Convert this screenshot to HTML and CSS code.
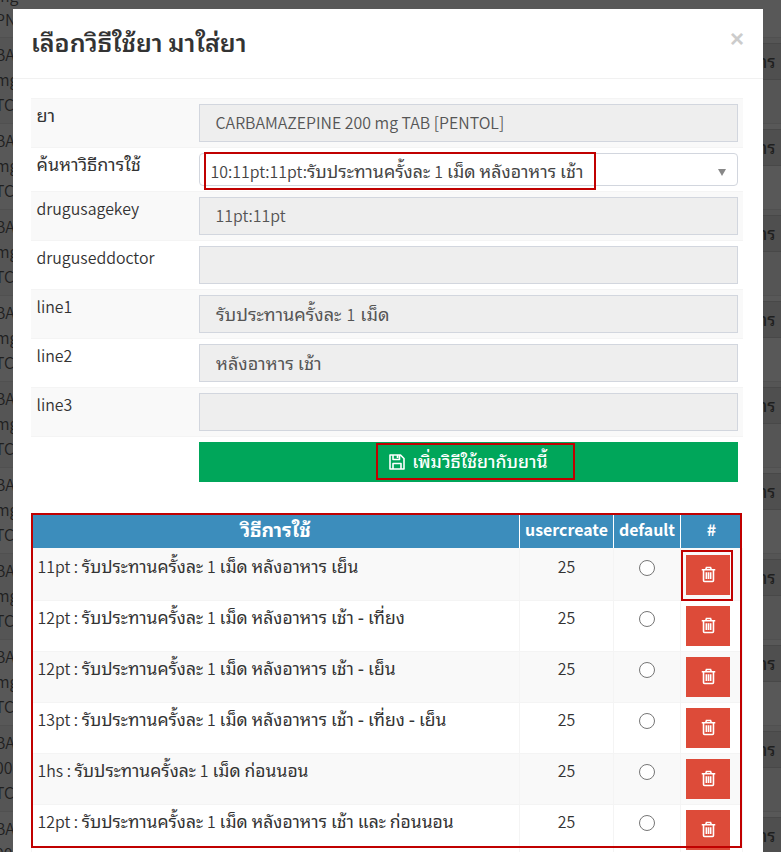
FILE: index.html
```html
<!DOCTYPE html>
<html lang="th">
<head>
<meta charset="utf-8">
<title>เลือกวิธีใช้ยา</title>
<link rel="stylesheet" href="styles.css">
</head>
<body>
<div class="page">
  <div class="back">
    <div class="strip">
      <div class="brow first">mg<br>PN</div>
      <div class="brow">BA<br>mg<br>TC</div><div class="brow">BA<br>mg<br>TC</div>
      <div class="brow">BA<br>mg<br>TC</div><div class="brow">BA<br>mg<br>TC</div>
      <div class="brow">BA<br>mg<br>TC</div><div class="brow">BA<br>mg<br>TC</div>
      <div class="brow">BA<br>mg<br>TC</div><div class="brow">BA<br>mg<br>TC</div>
      <div class="brow">BA<br>00<br>TC</div><div class="brow">BA<br>00</div>
    </div>
    <div class="strip right">
      <div class="brow first"></div>
      <div class="brow"><p>าร</p></div><div class="brow"><p>าร</p></div>
      <div class="brow"><p>าร</p></div><div class="brow"><p>าร</p></div>
      <div class="brow"><p>าร</p></div><div class="brow"><p>าร</p></div>
      <div class="brow"><p>าร</p></div><div class="brow"><p>าร</p></div>
      <div class="brow"><p>าร</p></div><div class="brow"><p>าร</p></div>
    </div>
  </div>
  <div class="modal">
    <div class="head"><h4>เลือกวิธีใช้ยา มาใส่ยา</h4><span class="close">×</span></div>
    <div class="body">
      <div class="form">
        <div class="row"><label class="th">ยา</label><div class="input latin">CARBAMAZEPINE 200 mg TAB [PENTOL]</div></div>
        <div class="row short"><label class="th">ค้นหาวิธีการใช้</label><div class="select"><span><b class="k">10:11pt:11pt:</b>รับประทานครั้งละ <b class="k">1</b> เม็ด หลังอาหาร เช้า</span><i></i></div></div>
        <div class="row"><label>drugusagekey</label><div class="input latin">11pt:11pt</div></div>
        <div class="row"><label>druguseddoctor</label><div class="input"></div></div>
        <div class="row"><label>line1</label><div class="input"><span class="t">รับประทานครั้งละ<b class="k">&nbsp; 1&nbsp; </b>เม็ด</span></div></div>
        <div class="row"><label>line2</label><div class="input"><span class="t">หลังอาหาร เช้า</span></div></div>
        <div class="row"><label>line3</label><div class="input"></div></div>
        <div class="row last"><label></label><div class="add"><svg width="16" height="16" viewBox="0 0 16 16"><path d="M1 1h10.5L15 4.5V15H1zM4 1v4.5h6.5V1M8.5 1v3M4 15V9.5h8V15" fill="none" stroke="#fff" stroke-width="1.6" stroke-linejoin="round"/></svg><span>เพิ่มวิธีใช้ยากับยานี้</span></div></div>
      </div>
      <div class="list">
        <div class="tr hd"><div class="th">วิธีการใช้</div><div>usercreate</div><div>default</div><div>#</div></div>
        <div class="tr one"><div><b class="k">11pt : </b>รับประทานครั้งละ <b class="k">1</b> เม็ด หลังอาหาร เย็น</div><div>25</div><div><i></i></div><div><a class="del"><svg width="15" height="17" viewBox="0 0 16 18"><path d="M.8 4h14.4M5 4l.8-2.5h4.4L11 4M2.7 4v11.5q0 1 1 1h8.6q1 0 1-1V4M5.7 6.5v7.3M8 6.5v7.3M10.3 6.5v7.3"/></svg></a></div></div>
        <div class="tr"><div><b class="k">12pt : </b>รับประทานครั้งละ <b class="k">1</b> เม็ด หลังอาหาร เช้า - เที่ยง</div><div>25</div><div><i></i></div><div><a class="del"><svg width="15" height="17" viewBox="0 0 16 18"><path d="M.8 4h14.4M5 4l.8-2.5h4.4L11 4M2.7 4v11.5q0 1 1 1h8.6q1 0 1-1V4M5.7 6.5v7.3M8 6.5v7.3M10.3 6.5v7.3"/></svg></a></div></div>
        <div class="tr"><div><b class="k">12pt : </b>รับประทานครั้งละ <b class="k">1</b> เม็ด หลังอาหาร เช้า - เย็น</div><div>25</div><div><i></i></div><div><a class="del"><svg width="15" height="17" viewBox="0 0 16 18"><path d="M.8 4h14.4M5 4l.8-2.5h4.4L11 4M2.7 4v11.5q0 1 1 1h8.6q1 0 1-1V4M5.7 6.5v7.3M8 6.5v7.3M10.3 6.5v7.3"/></svg></a></div></div>
        <div class="tr"><div><b class="k">13pt : </b>รับประทานครั้งละ <b class="k">1</b> เม็ด หลังอาหาร เช้า - เที่ยง - เย็น</div><div>25</div><div><i></i></div><div><a class="del"><svg width="15" height="17" viewBox="0 0 16 18"><path d="M.8 4h14.4M5 4l.8-2.5h4.4L11 4M2.7 4v11.5q0 1 1 1h8.6q1 0 1-1V4M5.7 6.5v7.3M8 6.5v7.3M10.3 6.5v7.3"/></svg></a></div></div>
        <div class="tr"><div><b class="k">1hs : </b>รับประทานครั้งละ <b class="k">1</b> เม็ด ก่อนนอน</div><div>25</div><div><i></i></div><div><a class="del"><svg width="15" height="17" viewBox="0 0 16 18"><path d="M.8 4h14.4M5 4l.8-2.5h4.4L11 4M2.7 4v11.5q0 1 1 1h8.6q1 0 1-1V4M5.7 6.5v7.3M8 6.5v7.3M10.3 6.5v7.3"/></svg></a></div></div>
        <div class="tr"><div><b class="k">12pt : </b>รับประทานครั้งละ <b class="k">1</b> เม็ด หลังอาหาร เช้า และ ก่อนนอน</div><div>25</div><div><i></i></div><div><a class="del"><svg width="15" height="17" viewBox="0 0 16 18"><path d="M.8 4h14.4M5 4l.8-2.5h4.4L11 4M2.7 4v11.5q0 1 1 1h8.6q1 0 1-1V4M5.7 6.5v7.3M8 6.5v7.3M10.3 6.5v7.3"/></svg></a></div></div>
      </div>
    </div>
  </div>
  <div class="mark m1"></div><div class="mark m2"></div><div class="mark m3"></div><div class="mark m4"></div>
</div>
</body>
</html>
```
FILE: styles.css
```css
* { box-sizing: border-box; }
body { margin: 0; }
.page { position: relative; width: 781px; height: 852px; overflow: hidden; background: #585858;
  font: 350 15.9px/24px "Noto Sans CJK SC", "Noto Sans Thai Looped", Loma, Waree, Garuda, "Noto Sans Thai", sans-serif; color: #333; }
.back { position: absolute; inset: 0; display: flex; justify-content: space-between; }
.strip { width: 40px; }
.right { width: 18px; }
.brow { height: 86px; padding: 4px 0 0; border-top: 1px solid #505050; line-height: 25px; color: #1f1f1f; margin-left: -5px; white-space: nowrap; }
.brow:nth-child(even) { background: #555; }
.brow.first { height: 37px; line-height: 24px; padding: 0 0 5px; border: 0; display: flex; flex-direction: column; justify-content: flex-end; }
.brow:nth-child(odd) { background: #585858; }
.right .brow { margin: 0; padding: 4px 0 0; overflow: hidden; }
.brow p { margin: 1px 0 0; height: 37px; line-height: 34px; font-size: 17px; background: #4f4f4f; border: solid #484848; border-width: 1px 0; font-weight: 500; }
.right .brow p { text-indent: -3px; }
.modal { position: relative; margin-left: 13px; top: 9px; width: 750px; height: 900px; background: #fff; }
.head { height: 70px; border-bottom: 1px solid #f1f1f1; padding: 0 19px 0 18px; display: flex; justify-content: space-between; }
h4 { margin: 0; font-size: 25px; line-height: 65px; font-weight: 650; }
.close { font: 700 24px/59px "Liberation Sans", sans-serif; color: #ccc; }
.body { padding: 19px 20px 0 18px; }
.row { display: flex; height: 49px; border-top: 1px solid #f4f4f4; padding: 5px; }
.row:nth-child(odd) { background: #f9f9f9; }
.form .row:first-child { height: 50px; margin-bottom: -1px; }
.form .row.last { height: 78px; background: #fff; }
.row.short { height: 44px; background: #fff; }
label { width: 163px; flex: none; padding-left: .5px; line-height: 24px; }
label.th { font-size: 18px; line-height: 20px; font-weight: 450; }
.input { width: 539px; height: 38px; background: #eee; border: 1px solid #d2d6de; padding: 0 16px; line-height: 34px; color: #555; }
.input.latin { line-height: 36px; padding-left: 15.5px; }
.t { font-size: 18.1px; font-weight: 450; }
.input .k { word-spacing: -1px; }
.select { width: 539px; height: 33px; border: 1px solid #d2d6de; border-radius: 4px; padding: 0 11px 0 10.5px; line-height: 36px; display: flex; justify-content: space-between; align-items: center; color: #444; font-size: 17.8px; font-weight: 450; }
.select span { margin-top: 2px; }
.select i { border: solid transparent; border-width: 7px 4px 0; border-top-color: #888; margin-top: 5px; }
.k { font-weight: 350; font-size: 15.9px; }
.add { width: 539px; height: 40px; background: #00a65a; color: #fff; display: flex; align-items: center; justify-content: center; gap: 7px; font-weight: 500; font-size: 17.6px; line-height: 36px; }
.add span { margin-top: -3px; }
.list { border-left: 1px solid #f4f4f4; }
.tr { display: grid; grid-template-columns: 488px 94px 67px 62px; height: 51px; border-top: 1px solid #f4f4f4; }
.tr > div { border-right: 1px solid #f4f4f4; padding: 5px; text-align: center; line-height: 24px; }
.tr > div:first-child { text-align: left; font-size: 17.5px; font-weight: 450; line-height: 22px; padding-left: 5.5px; }
.tr:nth-child(even) { background: #f9f9f9; }
.tr.one { height: 52px; border: 0; }
.tr.one > div { padding-top: 7px; }
.tr.hd { height: 34px; background: #3c8dbc; color: #fff; font-weight: 700; border: 0; }
.tr.hd > div { padding: 4px 0; border-color: #fff; text-align: center; line-height: 24px; }
.tr.hd > div:first-child { font-size: 19.3px; font-weight: 700; text-align: center; line-height: 22px; }
.tr i { display: block; width: 16px; height: 16px; border: 1px solid #767676; border-radius: 50%; background: #fff; margin: 5px auto 0; }
.del { display: flex; width: 44px; height: 40px; padding-bottom: 2px; background: #dd4b39; align-items: center; justify-content: center; }
.del svg { fill: none; stroke: #fff; stroke-width: 1.7; }
.mark { position: absolute; border: 2px solid #c00000; }
.m1 { left: 204px; top: 152px; width: 392px; height: 38px; }
.m2 { left: 376px; top: 443px; width: 199px; height: 37px; }
.m3 { left: 31px; top: 513px; width: 711px; height: 335px; }
.m4 { left: 681px; top: 550px; width: 52px; height: 51px; }
```
